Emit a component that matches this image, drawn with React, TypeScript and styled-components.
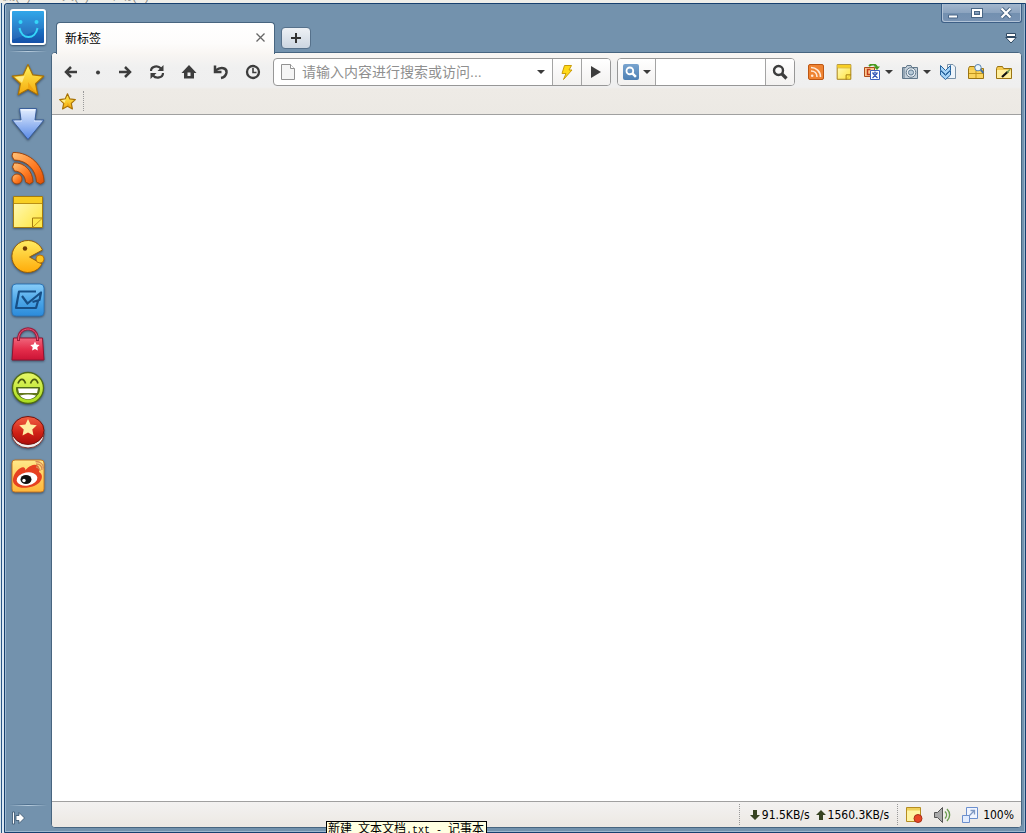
import React from "react";
import styled, { createGlobalStyle } from "styled-components";

const GlobalStyle = createGlobalStyle`
  * { box-sizing: border-box; }
  body { margin: 0; background: #efeee9; }
  body, button, input { font-family: "Liberation Sans", "Noto Sans CJK SC", sans-serif; font-size: 12px; color: #000; }
  button { padding: 0; border: 0; background: none; display: flex; align-items: center; justify-content: center; }
  svg { display: block; flex: none; }
`;

const Desktop = styled.div`
  position: relative;
  display: flex;
  flex-direction: column;
  height: 100vh;
  overflow: hidden;
`;

const MenuBehind = styled.div`
  display: flex;
  align-items: flex-end;
  gap: 19px;
  height: 3px;
  padding-left: 3px;
  overflow: hidden;
  color: #8a8a84;
  line-height: 14px;
  white-space: pre;
`;

const DesktopRow = styled.div`
  display: flex;
  flex: 1;
  min-height: 0;
`;

const EdgeBehind = styled.div`
  width: 4px;
  background: linear-gradient(90deg, #dce8ee 1px, #2c5888 1px, #2c5888 2px, #dce8f2 2px);
`;

const BrowserWindow = styled.div`
  display: flex;
  flex: 1;
  min-width: 0;
  border: 1px solid #17406f;
  border-radius: 3px 0 0 0;
  background: #7392ad;
  box-shadow: inset 1px 0 #9db8cf, inset -1px -1px #9db8cf;
`;

const Sidebar = styled.nav`
  display: flex;
  flex-direction: column;
  align-items: center;
  width: 46px;
  padding: 5px 0 2px;
`;

const Groove = styled.div`
  width: 38px;
  height: 2px;
  background: linear-gradient(90deg, transparent, #b9cddd 50%, transparent) bottom / 100% 1px no-repeat,
    linear-gradient(90deg, transparent, #4e6f8d 50%, transparent) top / 100% 1px no-repeat;
`;

const LogoButton = styled.button`
  width: 36px;
  height: 36px;
  margin-bottom: 5px;
  border: 2px solid #fff;
  border-radius: 3px;
  background: linear-gradient(#20a0e8, #1550a8);
  box-shadow: 0 1px 2px #2d4a66;
`;

const Apps = styled.div`
  display: flex;
  flex: 1;
  flex-direction: column;
  padding-top: 6px;
`;

const AppButton = styled.button`
  width: 44px;
  height: 44px;
  svg { filter: drop-shadow(0 1px 1px #3c5066); }
`;

const ExpandButton = styled.button`
  align-self: flex-start;
  width: 26px;
  height: 24px;
`;

const Main = styled.div`
  display: flex;
  flex: 1;
  flex-direction: column;
  min-width: 0;
  padding: 0 3px 4px 0;
`;

const TitleBar = styled.header`
  display: flex;
  justify-content: space-between;
  height: 48px;
`;

const Tabs = styled.div`
  display: flex;
  align-items: flex-end;
  padding-left: 5px;
`;

const Tab = styled.div`
  position: relative;
  display: flex;
  align-items: center;
  justify-content: space-between;
  width: 219px;
  height: 32px;
  margin-bottom: -2px;
  padding: 0 6px 2px 8px;
  border: 1px solid #476580;
  border-bottom: 0;
  border-radius: 4px 4px 0 0;
  background: linear-gradient(#fff, #fdfcfb 65%, #f9f6f3);
`;

const CloseTab = styled.button`
  width: 16px;
  height: 16px;
`;

const NewTab = styled.button`
  width: 30px;
  height: 22px;
  margin: 0 0 3px 6px;
  border: 1px solid #56718b;
  border-radius: 4px;
  background: linear-gradient(#eef1f5, #ccd6e1);
`;

const Corner = styled.div`
  display: flex;
  flex-direction: column;
  align-items: flex-end;
  justify-content: space-between;
  padding-bottom: 7px;
`;

const Controls = styled.div`
  display: grid;
  grid-template-columns: 22px 26px 1fr;
  width: 81px;
  height: 19px;
  border: 1px solid #3d5f86;
  border-top: 0;
  border-radius: 0 0 3px 3px;
  background: linear-gradient(#a3b7cd, #8ba3bf 50%, #7390b0 50%, #7893b3);
  box-shadow: inset 1px -1px #b2c3d6, inset -1px 0 #b2c3d6;
`;

const Control = styled.button``;

const TabList = styled.button`
  width: 22px;
  height: 14px;
`;

const Panel = styled.section`
  display: flex;
  flex: 1;
  flex-direction: column;
  min-height: 0;
  border: 1px solid #476580;
  border-radius: 4px;
  background: #fff;
  overflow: hidden;
`;

const Bars = styled.div`
  border-bottom: 1px solid #a0a0a0;
  background: linear-gradient(#f9f6f3, #f0f0f0 14px, #efefef 34px, #eeebe6 36px, #ece9e4);
`;

const Toolbar = styled.div`
  display: flex;
  align-items: center;
  height: 38px;
  padding: 0 3px;
`;

const NavButton = styled.button<{ $narrow?: boolean }>`
  width: ${(p) => (p.$narrow ? 22 : 32)}px;
  height: 28px;
`;

const Field = styled.div<{ $fill?: boolean }>`
  display: flex;
  flex: ${(p) => (p.$fill ? "1 1 0" : "0 0 178px")};
  min-width: 0;
  height: 28px;
  margin-left: ${(p) => (p.$fill ? 4 : 6)}px;
  margin-right: ${(p) => (p.$fill ? 0 : 7)}px;
  border: 1px solid #979797;
  border-radius: 4px;
  background: #fff;
  overflow: hidden;
`;

const PageBadge = styled.span`
  display: flex;
  align-items: center;
  padding: 0 5px 0 6px;
`;

const TextBox = styled.input`
  flex: 1;
  min-width: 0;
  padding: 0 1px;
  border: 0;
  outline: 0;
  background: transparent;
  font-size: 14px;
  &::placeholder { color: #8f8f8f; opacity: 1; }
`;

const DropButton = styled.button`
  width: 22px;
`;

const FieldButton = styled.button<{ $wide?: boolean; $first?: boolean }>`
  gap: 4px;
  width: ${(p) => (p.$wide ? 38 : 29)}px;
  border: solid #a4a4a4;
  border-width: ${(p) => (p.$first ? "0 1px 0 0" : "0 0 0 1px")};
  background: linear-gradient(#fff, #f2f1f0);
`;

const ToolButton = styled.button<{ $menu?: boolean }>`
  justify-content: flex-start;
  gap: 5px;
  width: ${(p) => (p.$menu ? 38 : 28)}px;
  height: 28px;
  padding-left: 6px;
`;

const Bookmarks = styled.div`
  display: flex;
  height: 23px;
  padding: 0 0 3px;
`;

const BookmarkButton = styled.button`
  width: 32px;
  border-right: 1px dotted #999;
`;

const Page = styled.main`
  flex: 1;
  background: #fff;
`;

const StatusBar = styled.footer`
  display: flex;
  justify-content: flex-end;
  height: 26px;
  border-top: 1px solid #a0a0a0;
  background: linear-gradient(#f3f2f1, #ece8e3);
  font-family: "DejaVu Sans Condensed", "DejaVu Sans", sans-serif;
  font-stretch: condensed;
`;

const Speeds = styled.div`
  display: flex;
  align-items: center;
  gap: 2px;
  margin: 2px 2px 2px 0;
  padding: 0 8px 0 10px;
  border: dotted #999;
  border-width: 0 1px;
`;

const UpArrow = styled.span`
  padding-left: 4px;
`;

const StatusButton = styled.button`
  width: 28px;
`;

const Zoom = styled.button`
  gap: 5px;
  padding: 0 7px 0 6px;
  font: inherit;
`;

const TaskTip = styled.div`
  position: absolute;
  left: 326px;
  bottom: -6px;
  height: 18px;
  padding: 0 2px 0 1px;
  border: 1px solid #000;
  background: #ffffe1;
  font-size: 12px;
  line-height: 15px;
  white-space: pre;
`;

const Latin = styled.span`
  font-family: "Liberation Mono", monospace;
  font-size: 10px;
`;

const Caret = () => (
  <svg width="8" height="4" viewBox="0 0 8 4"><path d="M0 0h8L4 4z" fill="#3a3a3a" /></svg>
);

const STAR = "M17 1.5l4.700 10.300 11 1.400-8.100 7.500 2.200 11.100L17 26.300 7.200 31.800l2.200-11.100-8.100-7.500 11-1.400z";

const Star = ({ size }: { size: number }) => (
  <svg width={size} height={size} viewBox="0 0 34 34">
    <defs>
      <linearGradient id="gold" x1="0" y1="0" x2="0" y2="1"><stop stopColor="#fff25a" /><stop offset="1" stopColor="#f5a80a" /></linearGradient>
    </defs>
    <path d={STAR} fill="url(#gold)" stroke="#a87208" strokeWidth={size < 20 ? 2.4 : 1.2} strokeLinejoin="round" />
    <path d="M17 4l-3.600 9-9.400 1.300 7 5.500z" fill="#fffbb4" opacity=".65" />
    <path d="M17 19l8 11-8-5z" fill="#e88e05" opacity=".45" />
  </svg>
);

const DownloadIcon = () => (
  <svg width="34" height="34" viewBox="0 0 34 34">
    <defs><linearGradient id="down" x1="0" y1="0" x2="0" y2="1"><stop stopColor="#e4efff" /><stop offset="1" stopColor="#5889e6" /></linearGradient></defs>
    <path d="M8.500 1.500h17l-1.500 11.500h9L17 32.500 1 13h9z" fill="url(#down)" stroke="#395f9b" strokeLinejoin="round" />
    <path d="M10 3h14M3.500 14H11M23 14h7.500" fill="none" stroke="#fff" opacity=".6" />
  </svg>
);

const FeedIcon = () => (
  <svg width="34" height="34" viewBox="0 0 34 34">
    <defs><linearGradient id="feed" x1="0" y1="0" x2="1" y2="1"><stop stopColor="#ffc47b" /><stop offset=".55" stopColor="#ff7d25" /><stop offset="1" stopColor="#e14f05" /></linearGradient></defs>
    <g fill="url(#feed)" stroke="#a2470d" strokeWidth="1" strokeLinejoin="round">
      <path d="M2 1.500C19 1 33 15 33 31l-3.500 2-4-2C25 18 15 9 3 9L1 5z" />
      <path d="M3 12c10-1 19 8 19 19l-3.500 2-4-2c0-6-5-11-11-11L1.500 16z" />
      <circle cx="6" cy="28" r="5" />
    </g>
  </svg>
);

const NoteIcon = ({ size }: { size: number }) => (
  <svg width={size} height={size} viewBox="0 0 34 34">
    <defs><linearGradient id="note" x1="0" y1="0" x2="1" y2="1"><stop stopColor="#fffbc0" /><stop offset="1" stopColor="#ffe43c" /></linearGradient></defs>
    <path d="M2.500 1.500h29v22l-9 9h-20z" fill="url(#note)" stroke="#a37b10" strokeWidth={size < 20 ? 2 : 1} />
    <path d="M3 2h28v6H3z" fill="#f8cf24" />
    <path d="M3 8.500h28" stroke="#b98f15" />
    <path d="M21.500 32.500v-9.500h10v9.500z" fill="#ffe94c" stroke="#a37b10" strokeWidth={size < 20 ? 2 : 1} />
    <path d="M22 32l9-8.500" stroke="#c89b1b" />
  </svg>
);

const GameIcon = () => (
  <svg width="34" height="34" viewBox="0 0 34 34">
    <defs><linearGradient id="pac" x1="0" y1="0" x2="0" y2="1"><stop stopColor="#ffec62" /><stop offset="1" stopColor="#ffab09" /></linearGradient></defs>
    <path d="M31.500 11A16 16 0 1 0 31 25L18.500 18z" fill="url(#pac)" stroke="#98600a" />
    <circle cx="14" cy="9.500" r="2.200" fill="#713c05" />
    <circle cx="29" cy="20" r="4" fill="#ffc51d" stroke="#bb760a" />
  </svg>
);

const MailIcon = () => (
  <svg width="34" height="34" viewBox="0 0 34 34">
    <defs><linearGradient id="mail" x1="0" y1="0" x2="0" y2="1"><stop stopColor="#87cdfa" /><stop offset=".5" stopColor="#4fa8e8" /><stop offset="1" stopColor="#2b8bdb" /></linearGradient></defs>
    <rect x="1" y="1" width="32" height="32" rx="4" fill="url(#mail)" stroke="#2e76b7" />
    <path d="M25 8.500H8L5 25h20l2-7M11 13l5.500 7.500L30 9.500l-1.500 7.500-7 2" fill="none" stroke="#174f86" strokeWidth="2.200" strokeLinejoin="round" />
  </svg>
);

const BagIcon = () => (
  <svg width="34" height="34" viewBox="0 0 34 34">
    <defs><linearGradient id="bag" x1="0" y1="0" x2="0" y2="1"><stop stopColor="#f0667c" /><stop offset=".5" stopColor="#e52f4c" /><stop offset="1" stopColor="#cb1335" /></linearGradient></defs>
    <path d="M2.500 11h29L33 33H1z" fill="url(#bag)" stroke="#8e1530" strokeLinejoin="round" />
    <path d="M7.500 14V11C9-1.500 25-1.500 26.500 11V14" fill="none" stroke="#a01c3c" strokeWidth="3" />
    <path d="M7.500 13V11C9-1 25-1 26.500 11V13" fill="none" stroke="#e55a78" strokeWidth="1" />
    <path d="M24 14.500l1.400 2.900 3.200.5-2.300 2.300.5 3.200-2.800-1.500-2.900 1.500.6-3.200-2.400-2.300 3.300-.5z" fill="#fff" />
  </svg>
);

const SmileIcon = () => (
  <svg width="34" height="34" viewBox="0 0 34 34">
    <defs><linearGradient id="joy" x1="0" y1="0" x2="0" y2="1"><stop stopColor="#e8f868" /><stop offset="1" stopColor="#a9dc1c" /></linearGradient></defs>
    <circle cx="17" cy="17" r="15.500" fill="url(#joy)" stroke="#4f6b17" strokeWidth="1.300" />
    <path d="M7 12.500c2-5.500 6-5.500 7.500 0M19.500 12.500c2-5.500 6-5.500 7.500 0" fill="none" stroke="#4c5c0f" strokeWidth="1.700" />
    <path d="M5.500 16.500h23c1 15.500-24 15.500-23 0z" fill="#62781c" stroke="#4f6b17" />
    <path d="M7 17.500h20l-1 4.500H8zM9 24.500c5-1.500 11-1.500 16 0-4 5-12 5-16 0z" fill="#fff" />
  </svg>
);

const RedStarIcon = () => (
  <svg width="34" height="34" viewBox="0 0 34 34">
    <defs><linearGradient id="red" x1="0" y1="0" x2="0" y2="1"><stop stopColor="#f15e42" /><stop offset=".6" stopColor="#cf2015" /><stop offset="1" stopColor="#ac0d0b" /></linearGradient></defs>
    <ellipse cx="17" cy="19" rx="16" ry="14" fill="#eee" stroke="#80322c" />
    <ellipse cx="17" cy="15.500" rx="16" ry="14" fill="url(#red)" stroke="#74140f" />
    <path d="M17 4l2.600 5.500 6.200.8-4.500 4.300 1.200 6-5.500-3-5.500 3 1.200-6-4.500-4.300 6.200-.8z" fill="#ffeca2" />
  </svg>
);

const WeiboIcon = () => (
  <svg width="34" height="34" viewBox="0 0 34 34">
    <defs><linearGradient id="weibo" x1="0" y1="0" x2="0" y2="1"><stop stopColor="#ffe98a" /><stop offset="1" stopColor="#ffb638" /></linearGradient></defs>
    <rect x="1" y="1" width="32" height="32" rx="3" fill="url(#weibo)" stroke="#c77924" />
    <path d="M2 20C3 13 10 7 13 8.500c2 1 1 3 1 3s6-7 11-5.500c5 1 3 7 3 7 6 3 3 14-11 15.500C8 30 1 26 2 20z" fill="#e64121" />
    <ellipse cx="16" cy="20" rx="10.500" ry="6.500" fill="#fff" transform="rotate(-10 16 20)" />
    <ellipse cx="15" cy="20.500" rx="5.500" ry="4.500" fill="#111" /><circle cx="13" cy="21.500" r="1.700" fill="#fff" />
    <path d="M25 8c2 0 4 2 4 4M25 5c4 0 6 2.500 6 6M24.500 2.500c5 0 8 3 8 7" fill="none" stroke="#d98a54" strokeWidth="1.300" />
  </svg>
);

const Svg16 = ({ children }: { children: React.ReactNode }) => (
  <svg width="16" height="16" viewBox="0 0 16 16">{children}</svg>
);

const Line = ({ d, w = 2.5 }: { d: string; w?: number }) => (
  <path d={d} fill="none" stroke="#3d3d3d" strokeWidth={w} />
);

const SmallFeed = () => (
  <Svg16>
    <rect x=".5" y=".5" width="15" height="15" rx="1.500" fill="#ef8332" stroke="#bd5714" />
    <path d="M3 3.500c5 0 9.500 4 9.500 9.500M3 7c3.500 0 6 2.500 6 6" fill="none" stroke="#ffe9d6" strokeWidth="1.600" /><circle cx="4.200" cy="11.800" r="1.300" fill="#ffe9d6" />
  </Svg16>
);

const TranslateIcon = () => (
  <Svg16>
    <path d="M.5 3.500h10v9h-10z" fill="#fbc88e" stroke="#ad4a1b" />
    <path d="M6.500 5.500h-3v5h3" fill="none" stroke="#c2391b" strokeWidth="1.500" />
    <path d="M5 2C8-.5 12 0 13 3.500" fill="none" stroke="#479a20" strokeWidth="2" /><path d="M9.500 2.500H16L13 6z" fill="#479a20" />
    <path d="M6.500 6.500h9v9h-9z" fill="#fff" stroke="#3a61bd" />
    <path d="M8 9h6M11 7.500V9M9 9.500l4.500 4.500M13 9.500L8.500 14" fill="none" stroke="#3156b5" strokeWidth="1.200" />
  </Svg16>
);

const CameraIcon = () => (
  <Svg16>
    <path d="M.5 3.500H4l1-2h4l1 2h5.500v11H.5z" fill="#c5d0da" stroke="#62788a" />
    <path d="M1 4h2v10H1z" fill="#94a5b4" />
    <circle cx="9" cy="8.500" r="4.800" fill="#e9eff4" stroke="#62788a" /><circle cx="9" cy="8.500" r="2.600" fill="#b8c9d6" stroke="#607b93" />
  </Svg16>
);

const BatchIcon = () => (
  <Svg16>
    <path d="M7.500.5H13l2.500 2.500v11.500h-8z" fill="#eef4fa" stroke="#7992a9" />
    <path d="M.5 1.500l5 5 5-5v4.500l-5 4.500-5-4.500zM.5 6.500l5 5 5-5V11l-5 4.500-5-4.500z" fill="#a5d3f7" stroke="#27649e" />
  </Svg16>
);

const FolderIcon = ({ wand }: { wand?: boolean }) => (
  <Svg16>
    <path d="M.5 14.500V4.500l1-2h5l1 2h8v10z" fill="#f5ca4f" stroke="#9a7414" />
    <path d="M1 6h14v8H1z" fill={wand ? "#ffef9d" : "#fbd45c"} />
    {wand
      ? <><path d="M6 13l6-5.500" stroke="#111" strokeWidth="2.200" /><path d="M11 8.500l3-3" stroke="#6f9a54" strokeWidth="1.500" /></>
      : <><path d="M1 9.500h14M8 5v9" stroke="#c2951d" /><path d="M12.500 5.500l3 3.500" stroke="#47719e" strokeWidth="2" /><circle cx="10" cy="3.700" r="3.200" fill="#eaf6ff" stroke="#5480ae" /></>}
  </Svg16>
);

const SpeedArrow = ({ up }: { up?: boolean }) => (
  <svg width="10" height="10" viewBox="0 0 10 10">
    <path d={up ? "M5 0l5 5H7v5H3V5H0z" : "M3 0h4v5h3l-5 5-5-5h3z"} fill="#374322" />
  </svg>
);

const Lens = ({ color, size }: { color: string; size: number }) => (
  <svg width={size} height={size} viewBox="0 0 16 16">
    <circle cx="6.500" cy="6.500" r="4.500" fill="none" stroke={color} strokeWidth="2.400" />
    <path d="M9.500 9.500l5 5" stroke={color} strokeWidth="3.200" />
  </svg>
);

const EngineMark = styled.span`
  display: flex;
  align-items: center;
  justify-content: center;
  width: 16px;
  height: 16px;
  border-radius: 2px;
  background: linear-gradient(#79a4cf, #4e80b4);
`;

const apps: [string, React.ReactNode][] = [
  ["收藏", <Star size={34} />],
  ["下载", <DownloadIcon />],
  ["订阅", <FeedIcon />],
  ["记事", <NoteIcon size={34} />],
  ["游戏", <GameIcon />],
  ["邮件", <MailIcon />],
  ["购物", <BagIcon />],
  ["笑话", <SmileIcon />],
  ["明星", <RedStarIcon />],
  ["微博", <WeiboIcon />],
];

const navigation: [string, React.ReactNode][] = [
  ["后退", <><Line d="M14 8H3" /><Line d="M8 3L3 8l5 5" /></>],
  ["后退列表", <circle cx="8" cy="8.500" r="2" fill="#3d3d3d" />],
  ["前进", <><Line d="M2 8h11" /><Line d="M8 3l5 5-5 5" /></>],
  ["刷新", <><Line d="M2 7c0-5 7-6 10-2.500M14 9c0 5-7 6-10 2.500" w={2.2} /><path d="M14.500 1v6h-6zM1.500 15V9h6z" fill="#3d3d3d" /></>],
  ["主页", <path fillRule="evenodd" d="M8 1l7.500 8H13v5.500H3V9H.5zM6.500 8.500v3.500h3V8.500z" fill="#3d3d3d" />],
  ["恢复", <><Line d="M2.500 6.500c6-4.500 11.500-2 11 2-.5 3-2.500 5-5.500 5.500" /><Line d="M2 1.500V8h6.500" w={2.5} /></>],
  ["历史", <><circle cx="8" cy="8" r="6" fill="none" stroke="#3d3d3d" strokeWidth="2.300" /><Line d="M8 4v4.500h3.500" w={1.6} /></>],
];

const tools: [string, React.ReactNode, boolean?][] = [
  ["订阅", <SmallFeed />],
  ["记事本", <NoteIcon size={16} />],
  ["翻译", <TranslateIcon />, true],
  ["截图", <CameraIcon />, true],
  ["批量下载", <BatchIcon />],
  ["资源嗅探", <FolderIcon />],
  ["快速填表", <FolderIcon wand />],
];

export default function App() {
  return (
    <>
      <GlobalStyle />
      <Desktop>
        <MenuBehind><span>藏(A)</span><span>工具(T)</span><span>帮助(H)</span></MenuBehind>
        <DesktopRow>
          <EdgeBehind />
          <BrowserWindow>
            <Sidebar>
              <LogoButton aria-label="主菜单">
                <svg width="32" height="32" viewBox="0 0 32 32">
                  <path d="M0 0h32v17L0 29z" fill="#fff" opacity=".08" />
                  <circle cx="8.500" cy="11" r="2" fill="#36d6f8" /><circle cx="24.500" cy="11" r="2" fill="#36d6f8" />
                  <path d="M7.500 17c2 12 16 12 18 0" fill="none" stroke="#36d6f8" strokeWidth="2" />
                </svg>
              </LogoButton>
              <Groove />
              <Apps>
                {apps.map(([name, icon]) => <AppButton key={name} aria-label={name}>{icon}</AppButton>)}
              </Apps>
              <Groove />
              <ExpandButton aria-label="展开侧边栏">
                <svg width="13" height="14" viewBox="0 0 13 14"><path d="M.5 1h2v12h-2zM4 4.500h3V1.500L12.500 7 7 12.500v-3H4z" fill="#fff" stroke="#36516b" strokeWidth=".8" /></svg>
              </ExpandButton>
            </Sidebar>
            <Main>
              <TitleBar>
                <Tabs>
                  <Tab>
                    <span>新标签</span>
                    <CloseTab aria-label="关闭标签">
                      <svg width="9" height="9" viewBox="0 0 9 9"><path d="M.5.5l8 8m0-8l-8 8" stroke="#666" strokeWidth="1.300" /></svg>
                    </CloseTab>
                  </Tab>
                  <NewTab aria-label="新建标签">
                    <svg width="10" height="10" viewBox="0 0 10 10"><path d="M5 0v10M0 5h10" stroke="#333" strokeWidth="2" /></svg>
                  </NewTab>
                </Tabs>
                <Corner>
                  <Controls>
                    <Control aria-label="最小化"><svg width="10" height="12" viewBox="0 0 10 12"><path d="M.5 8h9v3h-9z" fill="#fff" stroke="#4a6788" /></svg></Control>
                    <Control aria-label="最大化"><svg width="12" height="10" viewBox="0 0 12 10"><path d="M2 2h8v6H2z" fill="none" stroke="#496685" strokeWidth="4" /><path d="M2 2h8v6H2z" fill="none" stroke="#fff" strokeWidth="2" /></svg></Control>
                    <Control aria-label="关闭"><svg width="12" height="12" viewBox="0 0 12 12"><path d="M1.500 1.500l9 9m0-9l-9 9" stroke="#496685" strokeWidth="4" /><path d="M1.500 1.500l9 9m0-9l-9 9" stroke="#fff" strokeWidth="2.200" /></svg></Control>
                  </Controls>
                  <TabList aria-label="标签列表">
                    <svg width="12" height="11" viewBox="0 0 12 11"><path d="M1.500.5h9v3h-9zM.8 4.500h10.400L6 10z" fill="#fff" stroke="#2f4962" /></svg>
                  </TabList>
                </Corner>
              </TitleBar>
              <Panel>
                <Bars>
                  <Toolbar>
                    {navigation.map(([name, icon], i) => (
                      <NavButton key={name} $narrow={i === 1} aria-label={name}><Svg16>{icon}</Svg16></NavButton>
                    ))}
                    <Field $fill>
                      <PageBadge>
                        <svg width="16" height="16" viewBox="0 0 16 16"><path d="M1.500.5h9l4 4v11h-13z" fill="#f5f5f5" stroke="#929292" /><path d="M10.500.5v4h4" fill="#fff" stroke="#929292" /></svg>
                      </PageBadge>
                      <TextBox aria-label="地址" placeholder="请输入内容进行搜索或访问..." />
                      <DropButton aria-label="地址列表"><Caret /></DropButton>
                      <FieldButton aria-label="极速模式">
                        <svg width="12" height="15" viewBox="0 0 12 15"><path d="M3.500.5h7l-2.500 4.500h3L2.500 14.500 5 8.500H1z" fill="#ffd918" stroke="#c99b08" strokeLinejoin="round" /></svg>
                      </FieldButton>
                      <FieldButton aria-label="转到">
                        <svg width="10" height="12" viewBox="0 0 10 12"><path d="M0 0l10 6-10 6z" fill="#3d3d3d" /></svg>
                      </FieldButton>
                    </Field>
                    <Field>
                      <FieldButton $wide $first aria-label="选择搜索引擎">
                        <EngineMark><Lens color="#fff" size={12} /></EngineMark><Caret />
                      </FieldButton>
                      <TextBox aria-label="搜索" />
                      <FieldButton aria-label="搜索"><Lens color="#3d3d3d" size={16} /></FieldButton>
                    </Field>
                    {tools.map(([name, icon, menu]) => (
                      <ToolButton key={name} $menu={menu} aria-label={name}>{icon}{menu && <Caret />}</ToolButton>
                    ))}
                  </Toolbar>
                  <Bookmarks>
                    <BookmarkButton aria-label="收藏栏"><Star size={17} /></BookmarkButton>
                  </Bookmarks>
                </Bars>
                <Page />
                <StatusBar>
                  <Speeds>
                    <SpeedArrow /><span>91.5KB/s</span>
                    <UpArrow><SpeedArrow up /></UpArrow><span>1560.3KB/s</span>
                  </Speeds>
                  <StatusButton aria-label="拦截">
                    <svg width="18" height="17" viewBox="0 0 18 17"><path d="M1.500 1.500h14v14h-14z" fill="#fff3a2" stroke="#b58c20" /><path d="M2 2h13v2.500H2z" fill="#efd05a" /><circle cx="13" cy="12.500" r="4" fill="#e84624" stroke="#a6301a" /></svg>
                  </StatusButton>
                  <StatusButton aria-label="声音">
                    <svg width="17" height="16" viewBox="0 0 17 16"><path d="M.5 5.500h3l5-5v15l-5-5h-3z" fill="#a9a9a9" stroke="#555" /><path d="M11 4.500c2 2 2 5 0 7M13 2c3.500 3.500 3.500 8.500 0 12" fill="none" stroke="#6b9d50" strokeWidth="1.400" /></svg>
                  </StatusButton>
                  <Zoom>
                    <svg width="16" height="16" viewBox="0 0 16 16"><path d="M4.500.5h11v11h-11z" fill="#f0f5ff" stroke="#6b8fce" /><path d="M.5 8.500h7v7h-7z" fill="#e2ecfe" stroke="#6b8fce" /><path d="M7 9l5.500-5.500M8.500 3.500h4v4" fill="none" stroke="#7e98c2" strokeWidth="1.300" /></svg>
                    100%
                  </Zoom>
                </StatusBar>
              </Panel>
            </Main>
          </BrowserWindow>
        </DesktopRow>
        <TaskTip>新建<Latin> </Latin>文本文档<Latin>.txt - </Latin>记事本</TaskTip>
      </Desktop>
    </>
  );
}
